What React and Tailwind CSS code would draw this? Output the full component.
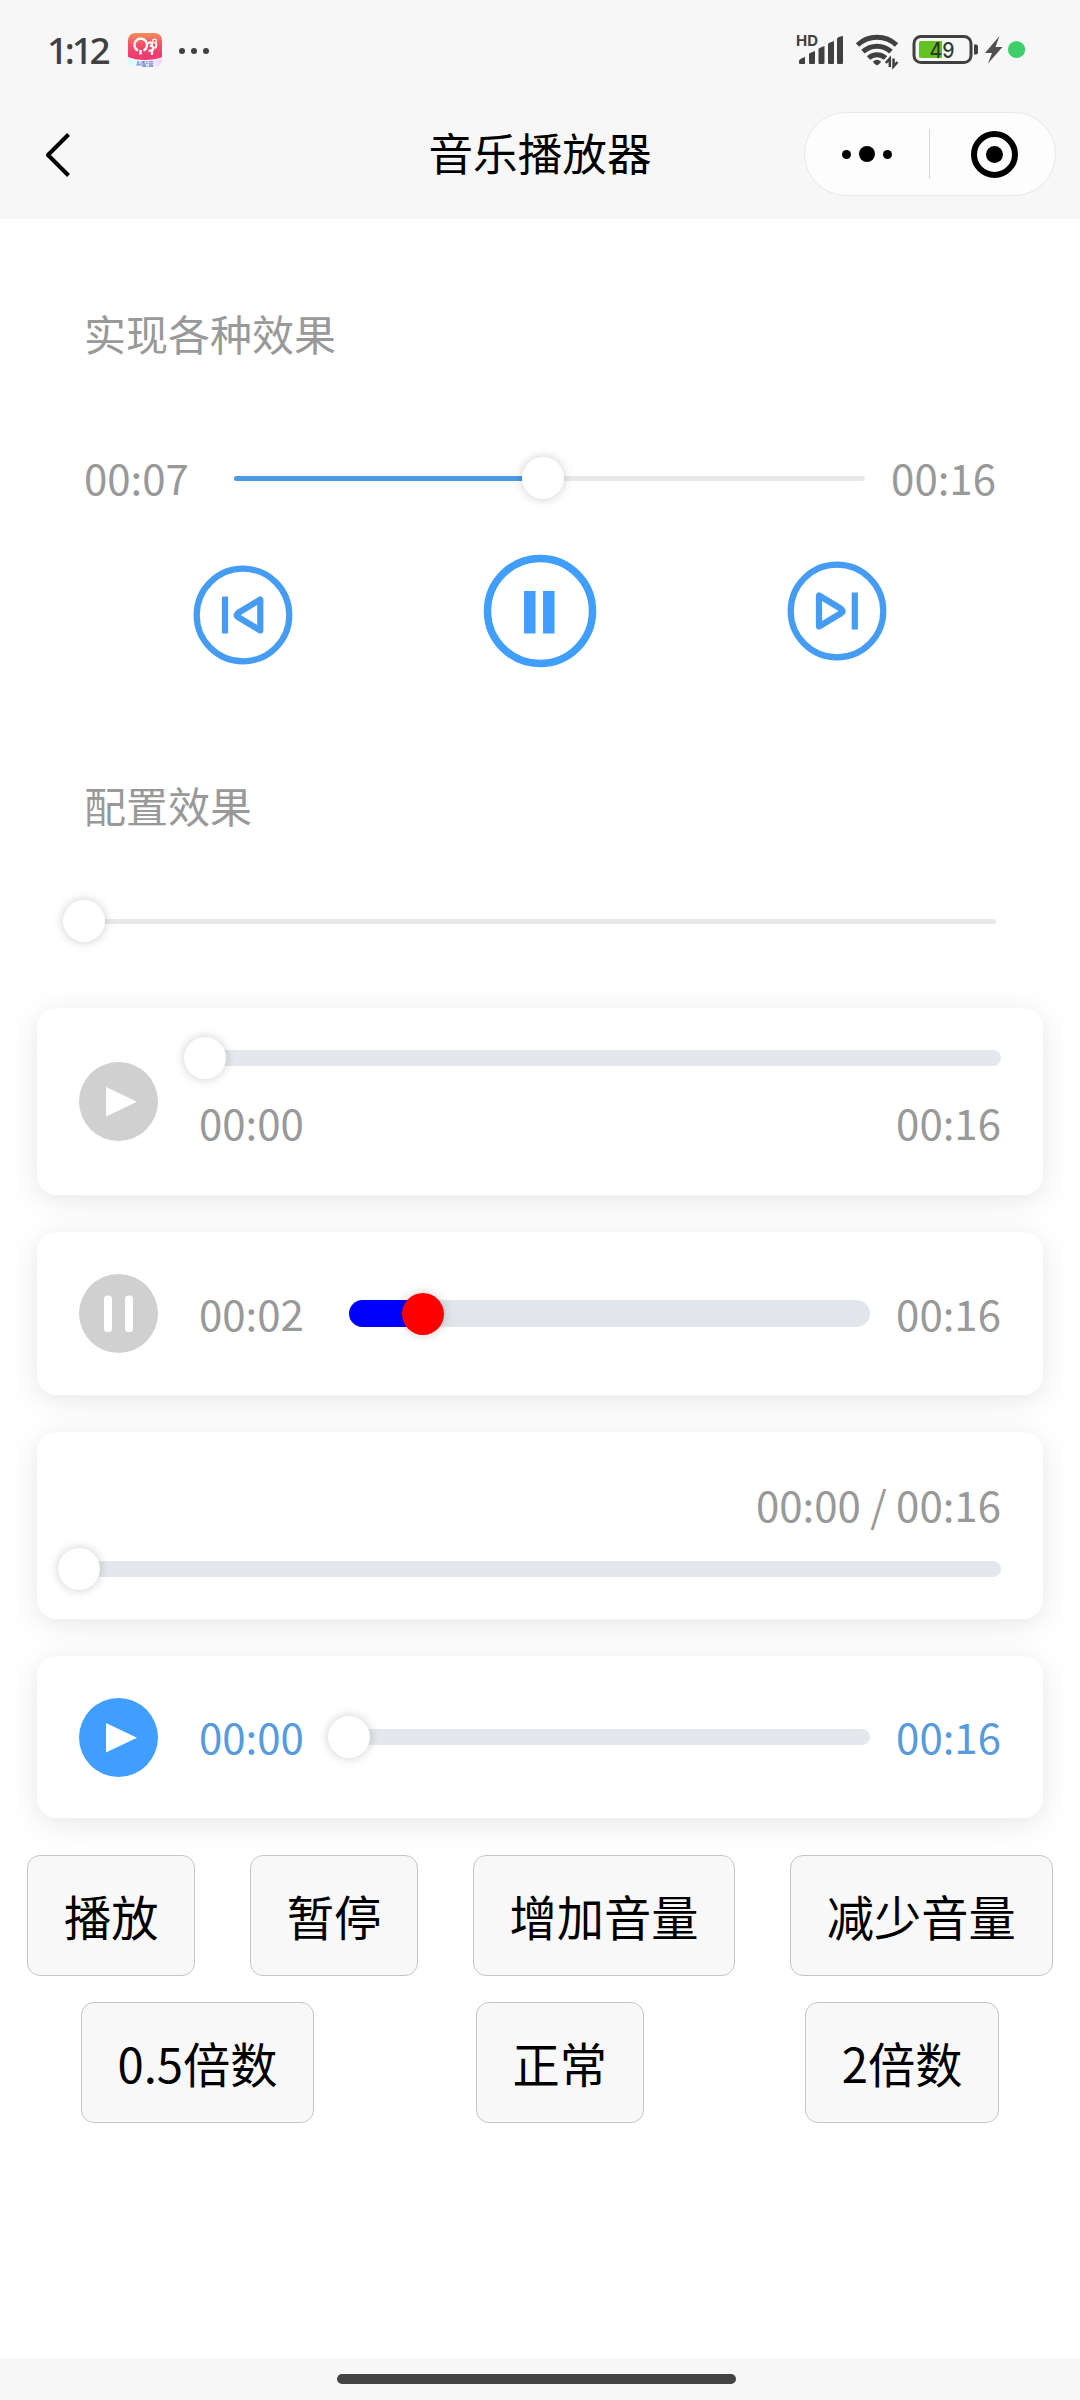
import { useState } from "react";

const StatusBar = () => (
  <div className="flex h-[99px] items-center justify-between pl-[47px] pr-[55px] text-[#404040]">
    <div className="flex items-center">
      <span className="w-[81px] whitespace-nowrap font-['Noto_Sans',sans-serif] text-[37px] font-medium leading-none tracking-[-3.300px]">
        1:12
      </span>

      {/* Notification app icon */}
      <svg className="h-[34px] w-[34px]" viewBox="0 0 34 34">
        <defs>
          <linearGradient id="badge" x1="0" y1="0" x2="0" y2="1">
            <stop offset="0" stopColor="#f3905a" />
            <stop offset="0.45" stopColor="#f0506a" />
            <stop offset="1" stopColor="#ee3473" />
          </linearGradient>
          <linearGradient id="badgeFoot" x1="0" y1="0" x2="1" y2="0">
            <stop offset="0" stopColor="#d5f8fa" />
            <stop offset="0.5" stopColor="#ffffff" />
            <stop offset="1" stopColor="#efd5fb" />
          </linearGradient>
        </defs>
        <rect width="34" height="34" rx="7" fill="url(#badgeFoot)" />
        <path d="M0 24V7a7 7 0 0 1 7-7h20a7 7 0 0 1 7 7v17c-9 4-25 4-34 0z" fill="url(#badge)" />
        <path d="M10 17.500a6.300 6.300 0 1 1 5.500 0M12.500 17v4.500" fill="none" stroke="#fff" strokeWidth="2.400" />
        <path d="M20 10.500c4-3 6 1.500 2 2.500c5.500-.5 4 6-1.500 4.500M24 17.500v4.500" fill="none" stroke="#fff" strokeWidth="2.200" />
        <circle cx="26.500" cy="8" r="1.800" fill="none" stroke="#fff" strokeWidth="1.200" />
        <path d="M26.500 15c2.500-1 2-4.500 1-6" fill="none" stroke="#fff" strokeWidth="2" />
        <text x="17" y="33" textAnchor="middle" fontSize="6" fontWeight="500" fill="#5569c8" fontFamily="'Noto Sans CJK SC', sans-serif">
          AI配音
        </text>
      </svg>

      <div className="ml-[17px] mt-[2px] flex gap-[6px]">
        <i className="h-[6px] w-[6px] rounded-full bg-[#404040]" />
        <i className="h-[6px] w-[6px] rounded-full bg-[#404040]" />
        <i className="h-[6px] w-[6px] rounded-full bg-[#404040]" />
      </div>
    </div>

    {/* Signal, wifi, battery */}
    <svg className="h-[40px] w-[230px]" viewBox="795 30 230 40">
      <text x="796" y="45.500" fontSize="15" fontWeight="700" fill="#404040" fontFamily="Inter, sans-serif" textLength="22" lengthAdjust="spacingAndGlyphs">
        HD
      </text>
      <g fill="#404040">
        <path d="M799 61q0-2 6-4v7h-5q-1 0-1-1z" />
        <path d="M809 54q0-1 6-3v12q0 1-1 1h-4q-1 0-1-1z" />
        <path d="M818.500 49q0-1 6-3v17q0 1-1 1h-4q-1 0-1-1z" />
        <path d="M828 44q0-1 6-3v22q0 1-1 1h-4q-1 0-1-1z" />
        <path d="M837 39q0-2 6-3v27q0 1-1 1h-4q-1 0-1-1z" />
      </g>
      <g fill="none" stroke="#404040" strokeWidth="5">
        <path d="M857.500 45a28.500 28.500 0 0 1 39 0" />
        <path d="M863 51.700a20.500 20.500 0 0 1 28 0" />
        <path d="M868.500 58a12.500 12.500 0 0 1 17 0" />
      </g>
      <path d="M873 61.500q4-3.500 8 0q0 1.500-4 4q-4-2.500-4-4z" fill="#404040" />
      <path d="M889.800 67v-8.500l-4 4.500M893.500 58.500v8l4-4.500" fill="none" stroke="#404040" strokeWidth="2.500" />
      <rect x="914" y="36.500" width="57" height="26" rx="7" fill="none" stroke="#404040" strokeWidth="3" />
      <path d="M974 44.500h2q2 0 2 2v6q0 2-2 2h-2z" fill="#404040" />
      <path d="M921 41h21v17h-21q-2 0-2-2v-13q0-2 2-2z" fill="#62c21f" />
      <text x="942" y="57.700" textAnchor="middle" fontSize="22" fontWeight="500" fill="#303a2c" fontFamily="Inter, sans-serif" textLength="25" lengthAdjust="spacingAndGlyphs">
        49
      </text>
      <path d="M999.500 36l-14.500 17h7l-4 10.500l14.500-16.500h-7z" fill="#505050" />
      <circle cx="1016.500" cy="49.500" r="8.600" fill="#3ecf6b" />
    </svg>
  </div>
);

const NavBar = () => (
  <div className="grid h-[120px] grid-cols-[1fr_auto_1fr] items-center">
    <svg className="ml-[44px] h-[48px] w-[28px] -translate-y-[4px]" viewBox="0 0 28 48" fill="none" stroke="#000" strokeWidth="4">
      <path d="M24.500 3.500L4 24l20.500 20.500" strokeLinejoin="round" />
    </svg>
    <h1 className="-translate-y-[7px] text-[44.600px] leading-none">音乐播放器</h1>
    <div className="mr-[24px] flex h-[84px] w-[252px] -translate-y-[5px] items-center justify-self-end rounded-full border border-[#e8e8e8] bg-[#fdfdfd]">
      <div className="flex flex-1 items-center justify-center gap-[8px]">
        <i className="h-[9px] w-[9px] rounded-full bg-black" />
        <i className="h-[16px] w-[16px] rounded-full bg-black" />
        <i className="h-[9px] w-[9px] rounded-full bg-black" />
      </div>
      <div className="h-[50px] w-px bg-[#d8d8d8]" />
      <div className="flex w-[125px] justify-center pl-[3px]">
        <div className="flex h-[47px] w-[47px] items-center justify-center rounded-full border-[6px] border-black">
          <i className="h-[17px] w-[17px] rounded-full bg-black" />
        </div>
      </div>
    </div>
  </div>
);

const Slider = ({ value = 0, track = "h-[16px] bg-[#e4e7eb]", fill = "bg-[#409eff]", knob = "bg-white" }) => (
  <div className="relative flex h-[42px] flex-1 items-center">
    <div className={`w-full overflow-hidden rounded-full ${track}`}>
      <div className={`h-full ${fill}`} style={{ width: `${value}%` }} />
    </div>
    <div
      className={`absolute top-0 h-[42px] w-[42px] -translate-x-1/2 rounded-full shadow-[0_0_10.500px_rgba(0,0,0,0.2)] ${knob}`}
      style={{ left: `${value}%` }}
    />
  </div>
);

const Time = ({ children }) => (
  <span className="whitespace-nowrap pb-[3px] text-[42px] leading-[57px]">{children}</span>
);

const RoundButton = ({ playing, color = "#d0d0d0", onClick }) => (
  <button className="shrink-0" onClick={onClick}>
    <svg className="block h-[79px] w-[79px]" viewBox="0 0 79 79">
      <circle cx="39.500" cy="39.500" r="39.500" fill={color} />
      {playing ? (
        <g fill="#fff">
          <rect x="25" y="21.500" width="8" height="36.500" rx="3.500" />
          <rect x="46" y="21.500" width="8" height="36.500" rx="3.500" />
        </g>
      ) : (
        <path d="M27 25l31 14.800l-31 14.700z" fill="#fff" />
      )}
    </svg>
  </button>
);

const Card = ({ className, children }) => (
  <div className={`relative rounded-[20px] bg-white px-[42px] shadow-[0_5px_31px_rgba(0,0,0,0.1)] ${className}`}>
    {children}
  </div>
);

const Button = ({ children }) => (
  <button className="h-[121px] rounded-[13px] border border-[#c6c6c6] bg-[#f8f8f8] px-[35.750px] text-[47.250px] leading-[119px]">
    {children}
  </button>
);

export default function App() {
  const [playing, setPlaying] = useState(true);

  return (
    <div className="flex h-[2400px] w-[1080px] flex-col overflow-hidden bg-white font-['Noto_Sans_CJK_SC',sans-serif] text-black">
      {/* Header */}
      <header className="h-[219px] bg-[#f7f7f7]">
        <StatusBar />
        <NavBar />
      </header>

      {/* Custom player */}
      <section className="px-[84px] pt-[82px] text-[#999]">
        <h2 className="text-[42px] leading-[64px]">实现各种效果</h2>

        <div className="mt-[83px] flex h-[60px] items-center">
          <Time>00:07</Time>
          <div className="ml-[45px] mr-[26px] flex flex-1">
            <Slider value={49} track="h-[5px] bg-[#e9e9e9]" fill="bg-[#4a9ae4]" />
          </div>
          <Time>00:16</Time>
        </div>

        <div className="mt-[43px] flex h-[120px] items-center justify-between px-[109px] text-[#459cf2]">
          <svg className="mt-[7px] h-[100px] w-[100px]" viewBox="0 0 100 100" fill="none" stroke="currentColor" strokeWidth="6.200">
            <circle cx="50" cy="50" r="46.300" />
            <path d="M32 31.500v37" />
            <path d="M67.300 34.500v31l-22-13.250q-3.500-2.250 0-4.500z" strokeLinejoin="round" />
          </svg>
          <button onClick={() => setPlaying(!playing)}>
            <svg className="block h-[114px] w-[114px]" viewBox="0 0 114 114" fill="none" stroke="#409eff" strokeWidth="7.500">
              <circle cx="57" cy="57" r="52.500" />
              {playing ? (
                <path d="M46.800 37v42.500M65.800 37v42.500" strokeWidth="11.500" />
              ) : (
                <path d="M46 37l32 20l-32 20z" />
              )}
            </svg>
          </button>
          <svg className="h-[100px] w-[100px]" viewBox="0 0 100 100" fill="none" stroke="currentColor" strokeWidth="6.200">
            <circle cx="50" cy="50" r="46.300" />
            <path d="M67.800 31.500v37" />
            <path d="M32 34.500v31l22-13.250q3.500-2.250 0-4.500z" strokeLinejoin="round" />
          </svg>
        </div>
      </section>

      {/* Configured players */}
      <section className="mt-[102px] text-[#999]">
        <div className="px-[84px]">
          <h2 className="text-[42px] leading-[64px]">配置效果</h2>
          <div className="mt-[63px] flex">
            <Slider track="h-[5px] bg-[#e9e9e9]" />
          </div>
        </div>

        <div className="mt-[66px] flex flex-col gap-[37px] px-[37px]">
          <Card className="flex h-[187px] items-center">
            <RoundButton />
            <div className="ml-[41px] flex h-full flex-1 flex-col pt-[29px]">
              <div className="ml-[6px] flex">
                <Slider />
              </div>
              <div className="mt-[14px] flex justify-between">
                <Time>00:00</Time>
                <Time>00:16</Time>
              </div>
            </div>
          </Card>

          <Card className="flex h-[163px] items-center">
            <RoundButton playing />
            <div className="ml-[41px] flex flex-1 items-center">
              <Time>00:02</Time>
              <div className="ml-[45px] mr-[26px] flex flex-1">
                <Slider value={14.2} track="h-[27px] bg-[#e2e6eb]" fill="bg-[#0000ff]" knob="bg-[#ff0000]" />
              </div>
              <Time>00:16</Time>
            </div>
          </Card>

          <Card className="flex h-[187px] flex-col pt-[43px]">
            <div className="flex justify-end">
              <Time>00:00 / 00:16</Time>
            </div>
            <div className="mt-[13px] flex">
              <Slider />
            </div>
          </Card>

          <Card className="flex h-[162px] items-center text-[#559bdd]">
            <RoundButton color="#409eff" />
            <div className="ml-[41px] flex flex-1 items-center">
              <Time>00:00</Time>
              <div className="ml-[45px] mr-[26px] flex flex-1">
                <Slider />
              </div>
              <Time>00:16</Time>
            </div>
          </Card>
        </div>
      </section>

      {/* Controls */}
      <div className="relative mt-[37px] flex justify-around">
        <Button>播放</Button>
        <Button>暂停</Button>
        <Button>增加音量</Button>
        <Button>减少音量</Button>
      </div>
      <div className="mt-[26px] flex justify-around">
        <Button>0.5倍数</Button>
        <Button>正常</Button>
        <Button>2倍数</Button>
      </div>

      {/* Home indicator */}
      <footer className="mt-auto flex h-[42px] justify-center bg-[#f7f7f7] pr-[7px] pt-[16px]">
        <div className="h-[10px] w-[399px] rounded-full bg-[#444]" />
      </footer>
    </div>
  );
}
